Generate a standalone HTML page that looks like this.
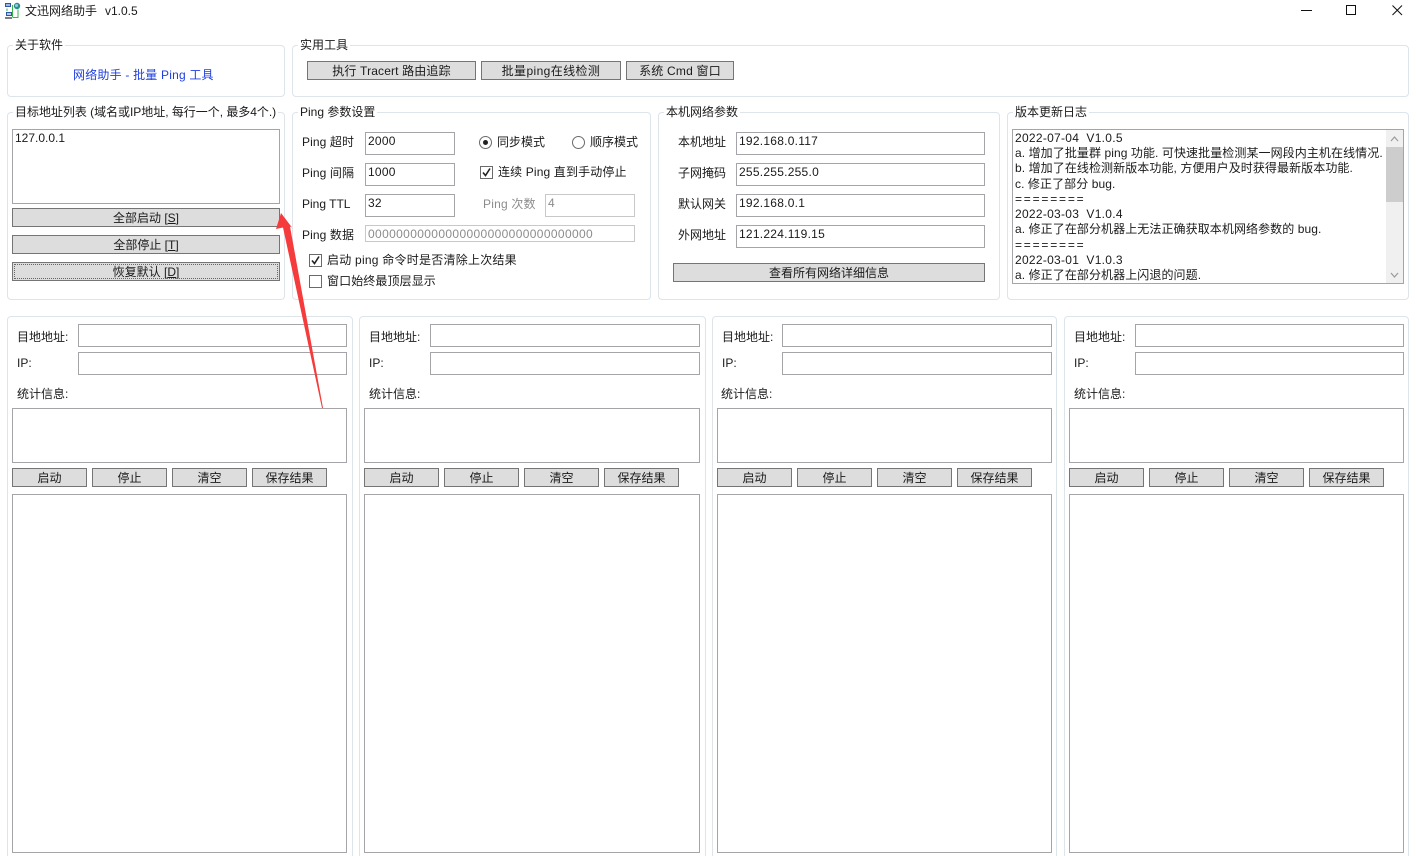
<!DOCTYPE html>
<html lang="zh">
<head>
<meta charset="utf-8">
<title>文迅网络助手 v1.0.5</title>
<style>
html,body{margin:0;padding:0;background:#fff;width:1416px;height:856px;overflow:hidden}
body{position:relative;font:12px/16px "Liberation Sans","Noto Sans CJK SC",sans-serif;color:#1a1a1a}
div,span{box-sizing:border-box;position:absolute;white-space:nowrap}
.g{border:1px solid #dde4ea;border-radius:4px;background:#fff}
.l{background:#fff;padding:0 2px;height:16px;line-height:16px}
.t{height:16px;line-height:16px}
.i{border:1px solid #a5a5a9;background:#fff;padding:0 2px;line-height:16px;letter-spacing:.25px}
.d{border-color:#c8c8c8;color:#8c8c8c}
.b{border:1px solid #757575;background:#dddddd;text-align:center;line-height:19px}
.f::after{content:"";position:absolute;left:1px;right:1px;top:1px;bottom:1px;border:1px dotted #666}
.x{width:13px;height:13px;border:1px solid #6a6a6a;background:#fff}
.r{width:13px;height:13px;border:1px solid #6a6a6a;border-radius:50%;background:#fff}
.r i{position:absolute;left:3px;top:3px;width:5px;height:5px;border-radius:50%;background:#222}
.x svg{position:absolute;left:0;top:0}
.log{font-size:12px;line-height:15.22px;padding:1px 2px 0;letter-spacing:.08px}
.log b{font-weight:normal;letter-spacing:.28px}
.log s{text-decoration:none;letter-spacing:1.8px}
u{text-decoration:underline}
</style>
</head>
<body>
<!-- title bar -->
<svg style="position:absolute;left:4px;top:2px" width="17" height="17" viewBox="0 0 17 17">
<rect x="1" y="1" width="6" height="4" fill="#2f55a8"/><rect x="2" y="2" width="4" height="2" fill="#9db8e6"/>
<circle cx="13" cy="4" r="3.2" fill="#2c8f8a"/><circle cx="12.5" cy="3.5" r="1.5" fill="#8fd0e0"/>
<path d="M8.5 3V15.5M3 6.5V9M14 7.5V15.5H9" stroke="#39b54a" fill="none"/>
<rect x="2" y="10" width="6" height="4" fill="#2f55a8"/><rect x="3" y="11" width="4" height="2" fill="#b7c9ea"/><rect x="1" y="15" width="7" height="2" fill="#7a7f8c"/>
</svg>
<span class="t" style="left:25px;top:3px">文迅网络助手</span>
<span class="t" style="left:105px;top:3px">v1.0.5</span>
<svg style="position:absolute;left:1296px;top:0" width="120" height="20" viewBox="0 0 120 20" fill="none" stroke="#111" stroke-width="1">
<path d="M5 10.5H16"/><rect x="50.5" y="5.5" width="9" height="9"/><path d="M96.5 5.5L106 15M106 5.5L96.5 15"/>
</svg>

<!-- 关于软件 -->
<div class="g" style="left:7px;top:45px;width:278px;height:52px"></div>
<span class="l" style="left:13px;top:37px">关于软件</span>
<span class="t" style="left:73px;top:67px;color:#1f3fe0;letter-spacing:.2px">网络助手 - 批量 Ping 工具</span>

<!-- 实用工具 -->
<div class="g" style="left:292px;top:45px;width:1117px;height:52px"></div>
<span class="l" style="left:298px;top:37px">实用工具</span>
<div class="b" style="left:307px;top:61px;width:169px;height:19px;letter-spacing:.15px">执行 Tracert 路由追踪</div>
<div class="b" style="left:481px;top:61px;width:140px;height:19px;letter-spacing:.4px">批量ping在线检测</div>
<div class="b" style="left:626px;top:61px;width:108px;height:19px;letter-spacing:.2px">系统 Cmd 窗口</div>

<!-- 目标地址 -->
<div class="g" style="left:7px;top:112px;width:278px;height:188px"></div>
<span class="l" style="left:13px;top:104px;letter-spacing:-.03px">目标地址列表 (域名或IP地址, 每行一个, 最多4个.)</span>
<div class="i" style="left:12px;top:129px;width:268px;height:75px;letter-spacing:0">127.0.0.1</div>
<div class="b" style="left:12px;top:208px;width:268px;height:19px">全部启动 [<u>S</u>]</div>
<div class="b" style="left:12px;top:235px;width:268px;height:19px">全部停止 [<u>T</u>]</div>
<div class="b f" style="left:12px;top:262px;width:268px;height:19px">恢复默认 [<u>D</u>]</div>

<!-- Ping 参数 -->
<div class="g" style="left:292px;top:112px;width:359px;height:188px"></div>
<span class="l" style="left:298px;top:104px">Ping 参数设置</span>
<span class="t" style="left:302px;top:134px;letter-spacing:.1px">Ping 超时</span>
<span class="t" style="left:302px;top:165px;letter-spacing:.1px">Ping 间隔</span>
<span class="t" style="left:302px;top:196px">Ping TTL</span>
<span class="t" style="left:302px;top:227px;letter-spacing:.1px">Ping 数据</span>
<div class="i" style="left:365px;top:132px;width:90px;height:23px">2000</div>
<div class="i" style="left:365px;top:163px;width:90px;height:23px">1000</div>
<div class="i" style="left:365px;top:194px;width:90px;height:23px">32</div>
<div class="i d" style="left:365px;top:225px;width:270px;height:17px;line-height:16px;letter-spacing:.36px">00000000000000000000000000000000</div>
<div class="r" style="left:479px;top:136px"><i></i></div>
<span class="t" style="left:497px;top:134px">同步模式</span>
<div class="r" style="left:572px;top:136px"></div>
<span class="t" style="left:590px;top:134px">顺序模式</span>
<div class="x" style="left:480px;top:166px"><svg width="11" height="11" viewBox="0 0 11 11"><path d="M2 5.5L4.5 8.5L9 1.5" fill="none" stroke="#222" stroke-width="1.6"/></svg></div>
<span class="t" style="left:498px;top:164px;letter-spacing:.14px">连续 Ping 直到手动停止</span>
<span class="t" style="left:483px;top:196px;color:#8c8c8c;letter-spacing:.2px">Ping 次数</span>
<div class="i d" style="left:545px;top:194px;width:90px;height:23px">4</div>
<div class="x" style="left:309px;top:254px"><svg width="11" height="11" viewBox="0 0 11 11"><path d="M2 5.5L4.5 8.5L9 1.5" fill="none" stroke="#222" stroke-width="1.6"/></svg></div>
<span class="t" style="left:327px;top:252px;letter-spacing:.24px">启动 ping 命令时是否清除上次结果</span>
<div class="x" style="left:309px;top:275px"></div>
<span class="t" style="left:327px;top:273px;letter-spacing:.1px">窗口始终最顶层显示</span>

<!-- 本机网络参数 -->
<div class="g" style="left:658px;top:112px;width:342px;height:188px"></div>
<span class="l" style="left:664px;top:104px">本机网络参数</span>
<span class="t" style="left:678px;top:134px">本机地址</span>
<span class="t" style="left:678px;top:165px">子网掩码</span>
<span class="t" style="left:678px;top:196px">默认网关</span>
<span class="t" style="left:678px;top:227px">外网地址</span>
<div class="i" style="left:736px;top:132px;width:249px;height:23px">192.168.0.117</div>
<div class="i" style="left:736px;top:163px;width:249px;height:23px">255.255.255.0</div>
<div class="i" style="left:736px;top:194px;width:249px;height:23px">192.168.0.1</div>
<div class="i" style="left:736px;top:225px;width:249px;height:23px">121.224.119.15</div>
<div class="b" style="left:673px;top:263px;width:312px;height:19px">查看所有网络详细信息</div>

<!-- 版本更新日志 -->
<div class="g" style="left:1007px;top:112px;width:402px;height:188px"></div>
<span class="l" style="left:1013px;top:104px">版本更新日志</span>
<div class="i log" style="left:1012px;top:129px;width:392px;height:155px;overflow:hidden">
<b>2022-07-04&nbsp; V1.0.5</b><br>
a. 增加了批量群 ping 功能. 可快速批量检测某一网段内主机在线情况.<br>
b. 增加了在线检测新版本功能, 方便用户及时获得最新版本功能.<br>
c. 修正了部分 bug.<br>
<s>========</s><br>
<b>2022-03-03&nbsp; V1.0.4</b><br>
a. 修正了在部分机器上无法正确获取本机网络参数的 bug.<br>
<s>========</s><br>
<b>2022-03-01&nbsp; V1.0.3</b><br>
a. 修正了在部分机器上闪退的问题.
</div>
<div style="left:1386px;top:130px;width:17px;height:153px;background:#f0f0f0"></div>
<div style="left:1386px;top:147px;width:17px;height:55px;background:#cdcdcd"></div>
<svg style="position:absolute;left:1386px;top:130px" width="17" height="153" viewBox="0 0 17 153" fill="none" stroke="#9a9a9a" stroke-width="1.2">
<path d="M5 11L8.5 7L12 11M5 143L8.5 147L12 143"/>
</svg>

<!-- panel 1 -->
<div class="g" style="left:7px;top:316px;width:346px;height:550px"></div>
<span class="t" style="left:17px;top:329px">目地地址:</span>
<span class="t" style="left:17px;top:355px">IP:</span>
<span class="t" style="left:17px;top:386px">统计信息:</span>
<div class="i" style="left:78px;top:324px;width:269px;height:23px"></div>
<div class="i" style="left:78px;top:352px;width:269px;height:23px"></div>
<div class="i" style="left:12px;top:408px;width:335px;height:55px"></div>
<div class="b" style="left:12px;top:468px;width:75px;height:19px">启动</div>
<div class="b" style="left:92px;top:468px;width:75px;height:19px">停止</div>
<div class="b" style="left:172px;top:468px;width:75px;height:19px">清空</div>
<div class="b" style="left:252px;top:468px;width:75px;height:19px">保存结果</div>
<div class="i" style="left:12px;top:494px;width:335px;height:359px"></div>

<!-- panel 2 -->
<div class="g" style="left:359px;top:316px;width:347px;height:550px"></div>
<span class="t" style="left:369px;top:329px">目地地址:</span>
<span class="t" style="left:369px;top:355px">IP:</span>
<span class="t" style="left:369px;top:386px">统计信息:</span>
<div class="i" style="left:430px;top:324px;width:270px;height:23px"></div>
<div class="i" style="left:430px;top:352px;width:270px;height:23px"></div>
<div class="i" style="left:364px;top:408px;width:336px;height:55px"></div>
<div class="b" style="left:364px;top:468px;width:75px;height:19px">启动</div>
<div class="b" style="left:444px;top:468px;width:75px;height:19px">停止</div>
<div class="b" style="left:524px;top:468px;width:75px;height:19px">清空</div>
<div class="b" style="left:604px;top:468px;width:75px;height:19px">保存结果</div>
<div class="i" style="left:364px;top:494px;width:336px;height:359px"></div>

<!-- panel 3 -->
<div class="g" style="left:712px;top:316px;width:345px;height:550px"></div>
<span class="t" style="left:722px;top:329px">目地地址:</span>
<span class="t" style="left:722px;top:355px">IP:</span>
<span class="t" style="left:721px;top:386px">统计信息:</span>
<div class="i" style="left:782px;top:324px;width:270px;height:23px"></div>
<div class="i" style="left:782px;top:352px;width:270px;height:23px"></div>
<div class="i" style="left:717px;top:408px;width:335px;height:55px"></div>
<div class="b" style="left:717px;top:468px;width:75px;height:19px">启动</div>
<div class="b" style="left:797px;top:468px;width:75px;height:19px">停止</div>
<div class="b" style="left:877px;top:468px;width:75px;height:19px">清空</div>
<div class="b" style="left:957px;top:468px;width:75px;height:19px">保存结果</div>
<div class="i" style="left:717px;top:494px;width:335px;height:359px"></div>

<!-- panel 4 -->
<div class="g" style="left:1064px;top:316px;width:345px;height:550px"></div>
<span class="t" style="left:1074px;top:329px">目地地址:</span>
<span class="t" style="left:1074px;top:355px">IP:</span>
<span class="t" style="left:1074px;top:386px">统计信息:</span>
<div class="i" style="left:1135px;top:324px;width:269px;height:23px"></div>
<div class="i" style="left:1135px;top:352px;width:269px;height:23px"></div>
<div class="i" style="left:1069px;top:408px;width:335px;height:55px"></div>
<div class="b" style="left:1069px;top:468px;width:75px;height:19px">启动</div>
<div class="b" style="left:1149px;top:468px;width:75px;height:19px">停止</div>
<div class="b" style="left:1229px;top:468px;width:75px;height:19px">清空</div>
<div class="b" style="left:1309px;top:468px;width:75px;height:19px">保存结果</div>
<div class="i" style="left:1069px;top:494px;width:335px;height:359px"></div>

<!-- red arrow -->
<svg style="position:absolute;left:0;top:0" width="1416" height="856" viewBox="0 0 1416 856">
<path d="M281 213L276 229L283 227.5L322 408L323 408L290 226.5L292 227.5Z" fill="#f53b3b"/>
</svg>
</body>
</html>
